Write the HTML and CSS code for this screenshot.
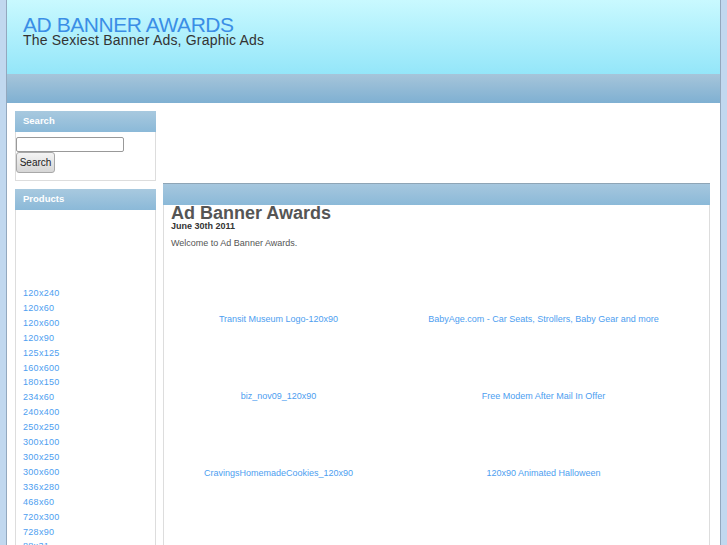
FILE: index.html
```html
<html lang="en">
	<head>
		<meta charset="utf-8" />
		<meta name="viewport" content="width=device-width, initial-scale=1" />
		<title>Ad Banner Awards</title>
		<link rel="stylesheet" href="styles.css">
	</head>

	<body>
		<div class="wrapper">
			<div class="header">
				<h1 class="site-title">AD BANNER AWARDS</h1>
				<div class="site-slogan">The Sexiest Banner Ads, Graphic Ads</div>
			</div>
			<div class="nav"></div>

			<div class="page">
				<div class="sidebar">
					<div class="block">
						<div class="block-title">Search</div>
						<form class="search-form">
							<input class="search-input" type="text" />
							<button class="search-button" type="button">Search</button>
						</form>
					</div>

					<div class="block block-products">
						<div class="block-title">Products</div>
						<div class="products-spacer"></div>
						<ul class="products">
							<li><a href="#">120x240</a></li>
							<li><a href="#">120x60</a></li>
							<li><a href="#">120x600</a></li>
							<li><a href="#">120x90</a></li>
							<li><a href="#">125x125</a></li>
							<li><a href="#">160x600</a></li>
							<li><a href="#">180x150</a></li>
							<li><a href="#">234x60</a></li>
							<li><a href="#">240x400</a></li>
							<li><a href="#">250x250</a></li>
							<li><a href="#">300x100</a></li>
							<li><a href="#">300x250</a></li>
							<li><a href="#">300x600</a></li>
							<li><a href="#">336x280</a></li>
							<li><a href="#">468x60</a></li>
							<li><a href="#">720x300</a></li>
							<li><a href="#">728x90</a></li>
							<li><a href="#">88x31</a></li>
						</ul>
					</div>
				</div>

				<div class="main">
					<div class="banner"></div>
					<div class="content">
						<div class="content-bar"></div>
						<div class="content-body">
							<h2 class="post-title">Ad Banner Awards</h2>
							<div class="post-date">June 30th 2011</div>
							<p class="post-text">Welcome to Ad Banner Awards.</p>

							<div class="ads">
								<div class="ad"><a href="#">Transit Museum Logo-120x90</a></div>
								<div class="ad"><a href="#">BabyAge.com - Car Seats, Strollers, Baby Gear and more</a></div>
								<div class="ad"><a href="#">biz_nov09_120x90</a></div>
								<div class="ad"><a href="#">Free Modem After Mail In Offer</a></div>
								<div class="ad"><a href="#">CravingsHomemadeCookies_120x90</a></div>
								<div class="ad"><a href="#">120x90 Animated Halloween</a></div>
							</div>
						</div>
					</div>
				</div>
			</div>
		</div>
	</body>
</html>
```

FILE: styles.css
```css
body {
	margin: 0;
	background: #c1d8ef;
	font-family: 'Liberation Sans', Arial, Helvetica, sans-serif;
	font-size: 9px;
	color: #555;
}

a {
	color: #4d9ef0;
	text-decoration: none;
}

.wrapper {
	width: 713px;
	height: 545px;
	margin: 0 auto;
	background: #fff;
	border-left: 1px solid #93a8be;
	border-right: 1px solid #93a8be;
	overflow: hidden;
}

.header {
	height: 74px;
	padding-left: 16px;
	box-sizing: border-box;
	background: linear-gradient(to bottom, #c9f9ff, #94e6f9);
}

.site-title {
	margin: 0;
	padding-top: 16px;
	font-size: 21px;
	line-height: 18px;
	font-weight: normal;
	letter-spacing: -0.45px;
	color: #3a8ee6;
}

.site-slogan {
	margin-top: -1px;
	font-size: 14px;
	line-height: 14px;
	letter-spacing: 0.2px;
	color: #333;
}

.nav {
	height: 29px;
	background: linear-gradient(to bottom, #a6c5da, #7fb0d2);
}

.page {
	display: flex;
	gap: 7px;
	padding: 8px 9px 0 8px;
}

.sidebar {
	width: 141px;
	display: flex;
	flex-direction: column;
	gap: 8px;
}

.block {
	border: 1px solid #ddd;
	border-top: none;
}

.block-title {
	height: 21px;
	margin: 0 -1px;
	padding-left: 8px;
	background: linear-gradient(to bottom, #a8c9df, #8bb9d8);
	color: #fff;
	font-size: 9.5px;
	font-weight: bold;
	line-height: 20px;
}

.search-form {
	margin: 0;
	padding: 5px 0 7px 0;
}

.search-input {
	display: block;
	width: 108px;
	height: 15px;
	margin: 0;
	box-sizing: border-box;
	border: 1px solid #999;
	border-radius: 2px;
	background: #fff;
}

.search-button {
	display: block;
	width: 39px;
	height: 21px;
	margin: 0;
	padding: 0;
	font-family: inherit;
	font-size: 10px;
	color: #222;
	border: 1px solid #a8a8a8;
	border-radius: 3px;
	background: linear-gradient(to bottom, #f4f4f4, #d6d6d6);
}

.block-products {
	height: 400px;
}

.products-spacer {
	height: 76px;
}

.products {
	list-style: none;
	margin: 0;
	padding: 0 0 0 7px;
}

.products li {
	line-height: 14.9px;
	letter-spacing: 0.3px;
}

.main {
	width: 547px;
}

.banner {
	height: 72px;
}

.content {
	height: 400px;
	border: 1px solid #ddd;
	border-top: none;
}

.content-bar {
	height: 21px;
	margin: 0 -1px;
	border-top: 1px solid #8ea5b6;
	background: linear-gradient(to bottom, #a6c7de, #8bb9d8);
}

.content-body {
	padding: 0 8px 0 7px;
}

.post-title {
	margin: 0;
	font-size: 18px;
	line-height: 16px;
	color: #555;
}

.post-date {
	font-weight: bold;
	line-height: 11px;
	color: #333;
}

.post-text {
	margin: 4px 0 0 0;
	line-height: 15px;
}

.ads {
	display: grid;
	grid-template-columns: 215px 1fr;
	grid-auto-rows: 77px;
}

.ad {
	display: flex;
	align-items: flex-end;
	justify-content: center;
	line-height: 15px;
	padding-bottom: 1px;
}
```
